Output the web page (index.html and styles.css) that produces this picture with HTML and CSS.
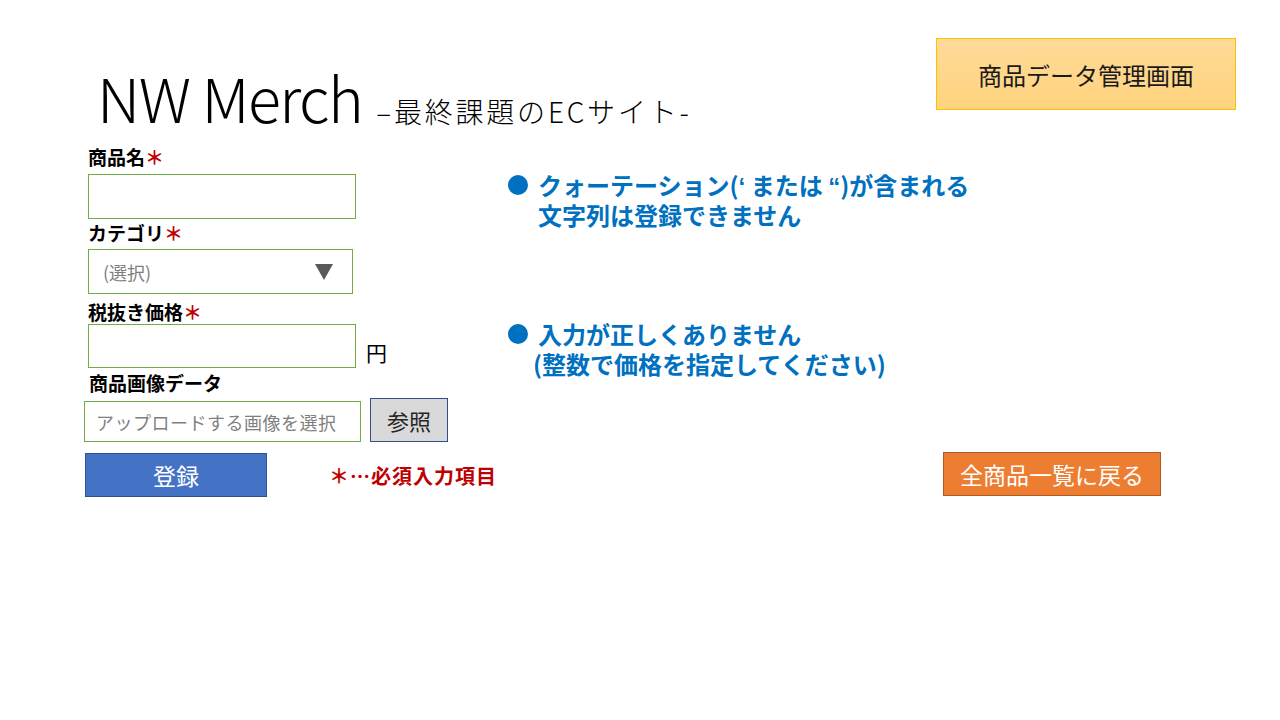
FILE: index.html
```html
<!DOCTYPE html>
<html lang="ja">
<head>
<meta charset="utf-8">
<title>NW Merch</title>
<link rel="stylesheet" href="styles.css">
</head>
<body>
<div class="page">
  <header class="header">
    <h1 class="title"><span class="brand">NW Merch</span><span class="sub">–最終課題のECサイト-</span></h1>
    <a class="admin-link">商品データ管理画面</a>
  </header>
  <main class="main">
    <form class="form">
      <label class="label">商品名<span class="req">＊</span></label>
      <div class="input"></div>
      <label class="label label-cat">カテゴリ<span class="req">＊</span></label>
      <div class="select"><span>(選択)</span><svg class="caret" width="18" height="16" viewBox="0 0 18 16"><polygon points="0,0 18,0 9,16" fill="#595959"/></svg></div>
      <label class="label label-price">税抜き価格<span class="req">＊</span></label>
      <div class="price-row"><div class="input input-price"></div><span class="yen">円</span></div>
      <label class="label label-image">商品画像データ</label>
      <div class="file-row"><div class="file-input">アップロードする画像を選択</div><button type="button" class="browse">参照</button></div>
    </form>
    <section class="messages">
      <div class="msg"><span class="dot"></span><div class="msg-text"><div class="line">クォーテーション(<span class="q">‘</span> または <span class="q">“</span>)が含まれる</div><div class="line">文字列は登録できません</div></div></div>
      <div class="msg msg-2"><span class="dot"></span><div class="msg-text"><div class="line">入力が正しくありません</div><div class="line paren-line">(整数で価格を指定してください)</div></div></div>
    </section>
  </main>
  <div class="actions">
    <button type="button" class="register">登録</button>
    <span class="note">＊…必須入力項目</span>
    <button type="button" class="back">全商品一覧に戻る</button>
  </div>
</div>
</body>
</html>
```
FILE: styles.css
```css
* { box-sizing: border-box; }
body {
  margin: 0;
  background: #fff;
  color: #000;
  font-family: "Noto Sans CJK JP", "Noto Sans", sans-serif;
}
.page { width: 1280px; height: 720px; overflow: hidden; }

.header {
  display: flex;
  justify-content: space-between;
  align-items: flex-start;
  height: 144px;
}
.title {
  margin: 0;
  padding: 66px 0 0 97px;
  display: flex;
  align-items: baseline;
  line-height: 1;
  font-weight: 300;
}
.brand { font-size: 61px; letter-spacing: -1.5px; }
.sub { font-size: 28px; letter-spacing: 2.8px; margin-left: 14px; }
.admin-link {
  margin: 38px 44px 0 0;
  width: 300px;
  height: 72px;
  border: 1px solid #FFC000;
  background: linear-gradient(#FFDA98, #FFD47E);
  display: flex;
  align-items: center;
  justify-content: center;
  font-size: 24px;
  color: #1a1a1a;
}

.main { display: flex; padding-left: 84px; }
.form {
  width: 424px;
  display: flex;
  flex-direction: column;
  align-items: flex-start;
}
.label {
  font-size: 19px;
  font-weight: 700;
  line-height: 26px;
  margin-left: 4px;
}
.req { color: #C00000; }
.input {
  margin: 4px 0 0 4px;
  width: 268px;
  height: 45px;
  border: 1px solid #70AD47;
  background: #fff;
}
.label-cat { margin-top: 1px; }
.select {
  margin: 3px 0 0 4px;
  width: 265px;
  height: 45px;
  border: 1px solid #70AD47;
  display: flex;
  align-items: center;
  justify-content: space-between;
  padding: 0 19px 0 14px;
  color: #7F7F7F;
  font-size: 18px;
}
.label-price { margin-top: 6px; line-height: 24px; }
.price-row { display: flex; align-items: flex-end; margin-left: 4px; gap: 10px; }
.input-price { margin: 0; height: 44px; }
.yen { font-size: 21px; line-height: 1; margin-bottom: 5px; }
.label-image { margin: 3px 0 0 5px; line-height: 24px; }
.file-row { display: flex; align-items: flex-end; gap: 9px; margin-top: 3px; }
.file-input {
  width: 277px;
  height: 41px;
  border: 1px solid #70AD47;
  padding-left: 11px;
  display: flex;
  align-items: center;
  font-size: 18px;
  letter-spacing: 0.5px;
  color: #7F7F7F;
  white-space: nowrap;
}
.browse {
  width: 78px;
  height: 44px;
  padding: 0;
  background: #D9D9D9;
  border: 1px solid #2F528F;
  font-family: inherit;
  font-size: 22px;
  color: #262626;
}

.messages { padding-top: 26px; }
.msg {
  display: flex;
  color: #0070C0;
  font-weight: 700;
  font-size: 24px;
  white-space: nowrap;
}
.line { height: 30px; line-height: 30px; }
.dot {
  flex: none;
  width: 20px;
  height: 20px;
  border-radius: 50%;
  background: #0070C0;
  margin: 5px 10px 0 0;
}
.q { font-family: "Liberation Sans", sans-serif; }
.msg-2 { margin-top: 89px; }
.paren-line { margin-left: -5px; }

.actions {
  display: flex;
  align-items: center;
  padding-left: 85px;
  margin-top: 11px;
}
.register {
  width: 182px;
  height: 44px;
  padding: 0;
  background: #4472C4;
  border: 1px solid #2F528F;
  color: #fff;
  font-family: inherit;
  font-size: 23px;
}
.note {
  margin-left: 62px;
  color: #C00000;
  font-weight: 700;
  font-size: 20px;
  letter-spacing: 1px;
}
.back {
  margin: -2px 119px 0 auto;
  width: 218px;
  height: 44px;
  padding: 0;
  background: #ED7D31;
  border: 1px solid #AE5A21;
  color: #fff;
  font-family: inherit;
  font-size: 23px;
}
```
